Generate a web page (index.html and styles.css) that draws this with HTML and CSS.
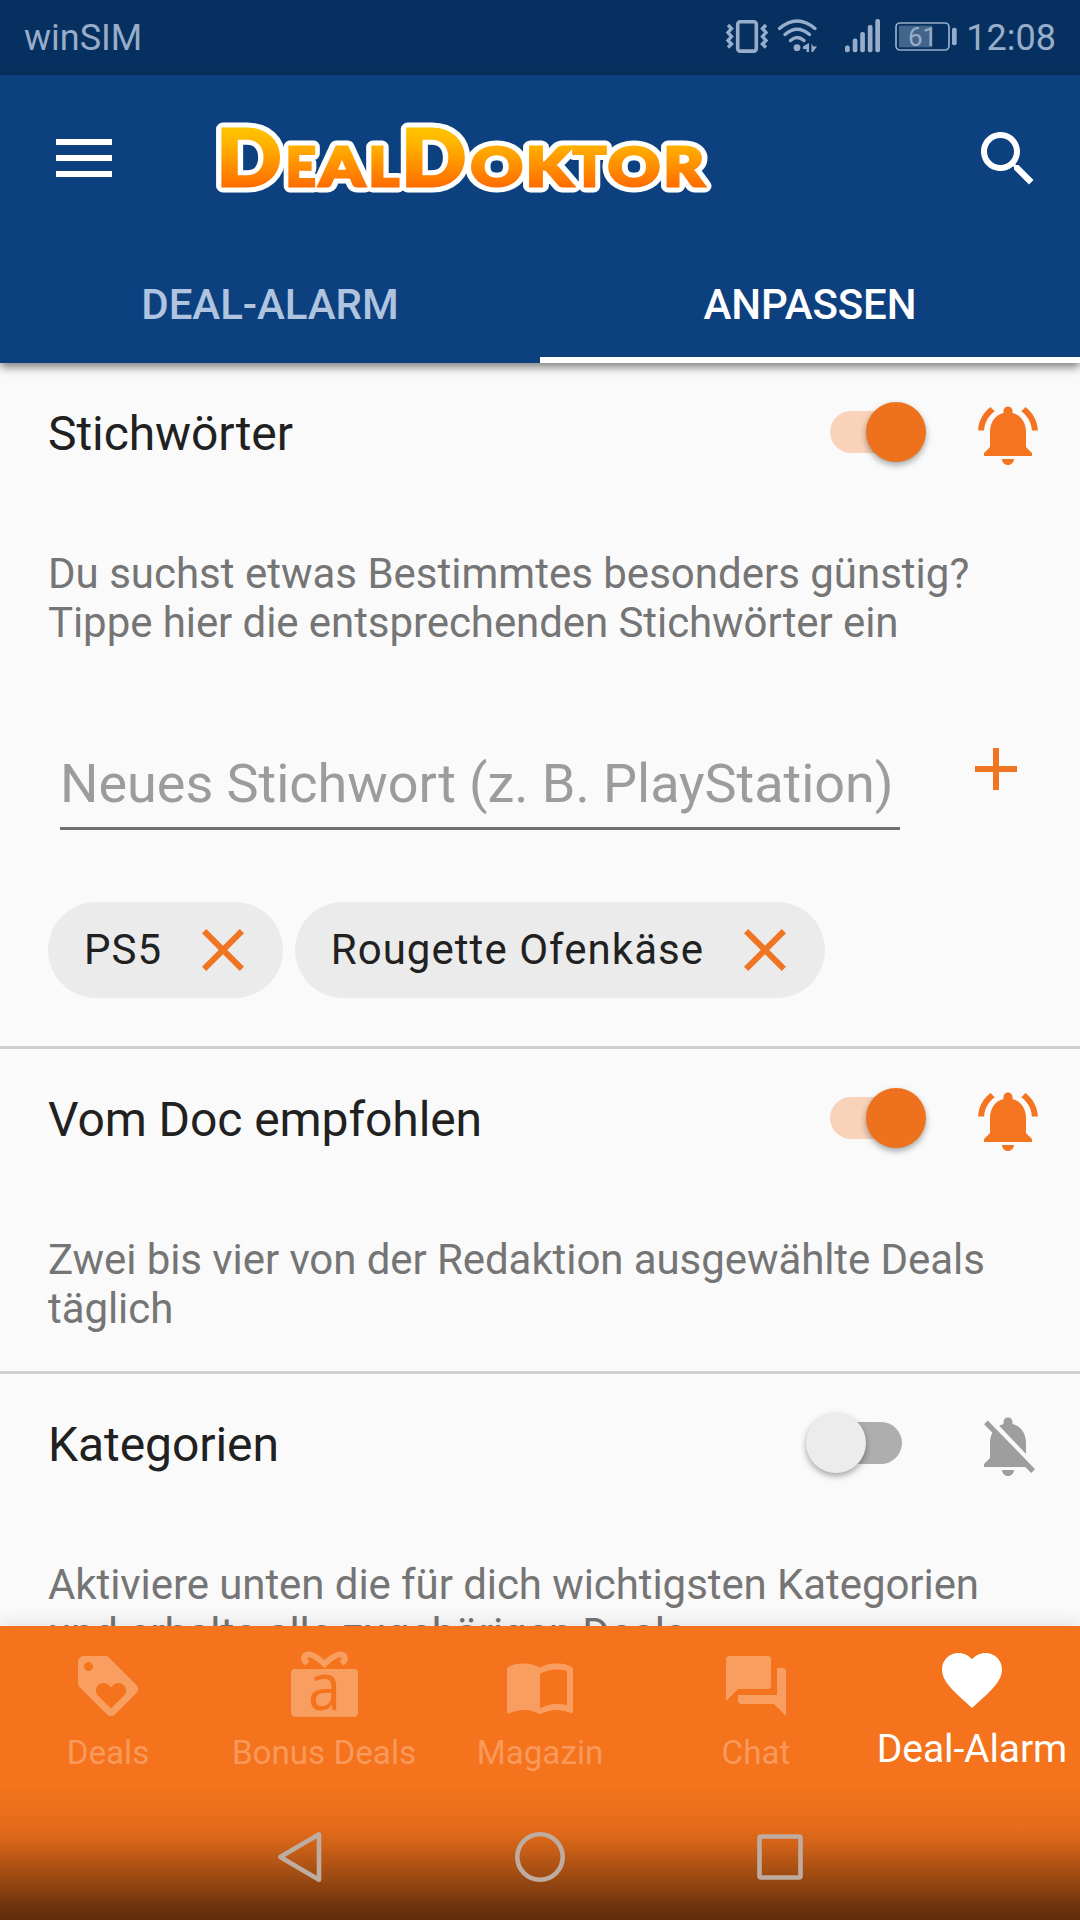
FILE: index.html
```
<!DOCTYPE html>
<html lang="de">
<head>
<meta charset="utf-8">
<title>DealDoktor – Deal-Alarm anpassen</title>
<link rel="stylesheet" href="styles.css">
</head>
<body>
<svg width="0" height="0" class="sprite" aria-hidden="true">
  <symbol id="bell-on" viewBox="0 0 24 24"><path d="M7.58 4.08L6.15 2.65C3.75 4.48 2.17 7.3 2.03 10.5h2c.15-2.65 1.51-4.97 3.55-6.42zm12.39 6.42h2c-.15-3.2-1.73-6.02-4.12-7.85l-1.42 1.43c2.02 1.45 3.39 3.77 3.54 6.42zM18 11c0-3.07-1.64-5.64-4.5-6.32V4c0-.83-.67-1.5-1.5-1.5s-1.5.67-1.5 1.5v.68C7.63 5.36 6 7.92 6 11v5l-2 2v1h16v-1l-2-2v-5zm-6 11c.14 0 .27-.01.4-.04.65-.14 1.18-.58 1.44-1.18.1-.24.15-.5.15-.78h-4c.01 1.1.9 2 2.01 2z"/></symbol>
  <symbol id="bell-off" viewBox="0 0 24 24"><path d="M20 18.69L7.84 6.14 5.27 3.49 4 4.76l2.8 2.8v.01c-.52.99-.8 2.16-.8 3.42v5l-2 2v1h13.73l2 2L21 19.72l-1-1.03zM12 22c1.11 0 2-.89 2-2h-4c0 1.11.89 2 2 2zm6-7.32V11c0-3.08-1.64-5.64-4.5-6.32V4c0-.83-.67-1.5-1.5-1.5s-1.5.67-1.5 1.5v.68c-.15.03-.29.08-.42.12-.1.03-.2.07-.3.11h-.01c-.01 0-.01 0-.02.01-.23.09-.46.2-.68.31 0 0-.01 0-.01.01L18 14.68z"/></symbol>
  <symbol id="close" viewBox="0 0 24 24"><path d="M19 6.41L17.59 5 12 10.59 6.41 5 5 6.41 10.59 12 5 17.59 6.41 19 12 13.41 17.59 19 19 17.59 13.41 12z"/></symbol>
</svg>
<div class="screen">
  <div class="statusbar">
    <span class="carrier">winSIM</span>
    <svg class="status-icons" width="240" height="75" viewBox="720 0 240 75">
      <g fill="none" stroke="currentColor">
        <rect x="737.7" y="21.7" width="18.6" height="29.4" rx="2.5" stroke-width="3.6"/>
        <path d="M728 25l3.5 3.5-3.5 4 3.5 4-3.5 4 3.5 3.5-3.5 3.5M766 25l-3.500 3.500 3.500 4-3.500 4 3.500 4-3.500 3.500 3.500 3.500" stroke-width="3.4"/>
        <path d="M779.500 28.500q17.500-15 35.500 0M785 34.500q12-10.500 24.500 0M790.500 40.500q6.500-6 13.500 0" stroke-width="3.400" stroke-linecap="round"/>
        <rect x="896" y="23" width="53" height="27" rx="4" stroke-width="1.700"/>
      </g>
      <g fill="currentColor">
        <circle cx="797" cy="47.700" r="3.400"/>
        <path d="M809 43v9h-2.500v-3h-3.500v-2.500zM811.500 43.500l2 3h3.500l-4 5.500h-1.500z"/>
        <rect x="845" y="45.500" width="4.700" height="6.700" rx="2"/>
        <rect x="852.700" y="38.500" width="4.700" height="13.700" rx="2"/>
        <rect x="860.200" y="32" width="4.700" height="20.200" rx="2"/>
        <rect x="867.800" y="25" width="4.700" height="27.200" rx="2"/>
        <rect x="875.300" y="19" width="4.700" height="33.200" rx="2"/>
        <rect x="899" y="25.700" width="33.300" height="21.600" opacity=".42"/>
        <rect x="952" y="27.700" width="4.700" height="17.600" rx="2"/>
        <text class="battery-level" x="908" y="46">61</text>
      </g>
    </svg>
    <span class="clock">12:08</span>
  </div>

  <header class="header">
    <div class="toolbar">
      <svg class="menu" width="56" height="38" viewBox="0 0 56 38"><path fill="#fff" d="M0 0h56v6H0zM0 16h56v6H0zM0 32h56v6H0z"/></svg>
      <svg class="logo" width="500" height="84" viewBox="214 117 500 84">
        <defs>
          <linearGradient id="logo-fill" gradientUnits="userSpaceOnUse" x1="0" y1="129" x2="0" y2="187">
            <stop offset="0" stop-color="#ffc200"/><stop offset=".25" stop-color="#ffb400"/><stop offset="1" stop-color="#ff6c00"/>
          </linearGradient>
          <g id="logo-word" class="logo-word">
            <text class="logo-big" x="216.700" y="185.500" textLength="64.500" lengthAdjust="spacingAndGlyphs">D</text>
            <text x="286" y="185.500" textLength="29.500" lengthAdjust="spacingAndGlyphs">E</text>
            <text x="319.800" y="185.500" textLength="44.500" lengthAdjust="spacingAndGlyphs">A</text>
            <text x="368.800" y="185.500" textLength="30" lengthAdjust="spacingAndGlyphs">L</text>
            <text class="logo-big" x="401.600" y="185.500" textLength="64.500" lengthAdjust="spacingAndGlyphs">D</text>
            <text x="470.800" y="185.500" textLength="52" lengthAdjust="spacingAndGlyphs">O</text>
            <text x="526" y="185.500" textLength="46" lengthAdjust="spacingAndGlyphs">K</text>
            <text x="573" y="185.500" textLength="33" lengthAdjust="spacingAndGlyphs">T</text>
            <text x="608" y="185.500" textLength="52" lengthAdjust="spacingAndGlyphs">O</text>
            <text x="663.800" y="185.500" textLength="40" lengthAdjust="spacingAndGlyphs">R</text>
          </g>
        </defs>
        <use href="#logo-word" fill="#fff" stroke="#fff" stroke-width="13" stroke-linejoin="round"/>
        <use href="#logo-word" fill="url(#logo-fill)" stroke="url(#logo-fill)" stroke-width="3.200"/>
      </svg>
      <svg class="search" width="72" height="72" viewBox="0 0 24 24"><path fill="#fff" d="M15.500 14h-.79l-.28-.27C15.410 12.590 16 11.110 16 9.500 16 5.910 13.090 3 9.500 3S3 5.910 3 9.500 5.910 16 9.500 16c1.610 0 3.090-.59 4.230-1.570l.27.28v.79l5 4.990L20.490 19l-4.990-5zm-6 0C7.010 14 5 11.990 5 9.500S7.010 5 9.500 5 14 7.010 14 9.500 11.990 14 9.500 14z"/></svg>
    </div>
    <nav class="tabs">
      <div class="tab">DEAL-ALARM</div>
      <div class="tab tab-active">ANPASSEN</div>
    </nav>
  </header>

  <main class="content">
    <section class="section">
      <div class="section-head">
        <h2>Stichwörter</h2>
        <div class="switch switch-on"><span class="knob"></span></div>
        <svg class="bell bell-active" width="72" height="72"><use href="#bell-on"/></svg>
      </div>
      <p>Du suchst etwas Bestimmtes besonders günstig?<br><span class="snug">Tippe hier die entsprechenden Stichwörter ein</span></p>
      <div class="keyword-row">
        <input class="keyword" type="text" placeholder="Neues Stichwort (z. B. PlayStation)">
        <svg width="72" height="72" viewBox="0 0 24 24"><path fill="#f07522" d="M19 13h-6v6h-2v-6H5v-2h6V5h2v6h6v2z"/></svg>
      </div>
      <div class="chips">
        <div class="chip"><span>PS5</span><svg width="72" height="72"><use href="#close"/></svg></div>
        <div class="chip"><span>Rougette Ofenkäse</span><svg width="72" height="72"><use href="#close"/></svg></div>
      </div>
    </section>
    <section class="section">
      <div class="section-head">
        <h2>Vom Doc empfohlen</h2>
        <div class="switch switch-on"><span class="knob"></span></div>
        <svg class="bell bell-active" width="72" height="72"><use href="#bell-on"/></svg>
      </div>
      <p class="snug">Zwei bis vier von der Redaktion ausgewählte Deals<br>täglich</p>
    </section>
    <section class="section">
      <div class="section-head">
        <h2>Kategorien</h2>
        <div class="switch"><span class="knob"></span></div>
        <svg class="bell" width="72" height="72"><use href="#bell-off"/></svg>
      </div>
      <p class="snug">Aktiviere unten die für dich wichtigsten Kategorien<br>und erhalte alle zugehörigen Deals</p>
    </section>
  </main>

  <footer class="footer">
    <nav class="bottom-nav">
      <div class="nav-item">
        <svg width="72" height="72" viewBox="0 0 24 24"><path d="M21.410 11.580l-9-9C12.050 2.220 11.550 2 11 2H4c-1.100 0-2 .9-2 2v7c0 .55.22 1.050.59 1.420l9 9c.36.36.86.58 1.410.58.55 0 1.050-.22 1.410-.59l7-7c.37-.36.59-.86.59-1.410 0-.55-.23-1.060-.59-1.420zM5.500 7C4.670 7 4 6.330 4 5.500S4.670 4 5.500 4 7 4.670 7 5.500 6.330 7 5.500 7zm11.770 8.270L13 19.540l-4.270-4.270C8.280 14.810 8 14.190 8 13.500c0-1.380 1.120-2.500 2.500-2.500.69 0 1.320.28 1.770.74l.73.72.73-.73c.45-.45 1.080-.73 1.770-.73 1.380 0 2.500 1.120 2.500 2.500 0 .69-.28 1.320-.73 1.770z"/></svg>
        <span>Deals</span>
      </div>
      <div class="nav-item">
        <svg width="72" height="72" viewBox="0 0 72 72">
          <rect x="3" y="19" width="67" height="47.700" rx="4"/>
          <path class="bow" d="M19.500 13.500C13 8 17 4 22 4.600c6 1 9.500 4.800 14.500 9.400 5-4.600 8.500-8.400 14.500-9.400 5-.6 9 3.400 2.500 8.900"/>
          <text class="gift-letter" x="20" y="59.800" textLength="33" lengthAdjust="spacingAndGlyphs">a</text>
        </svg>
        <span>Bonus Deals</span>
      </div>
      <div class="nav-item">
        <svg width="72" height="72" viewBox="0 0 24 24"><path d="M21 5c-1.110-.35-2.330-.5-3.500-.5-1.950 0-4.050.4-5.500 1.500-1.450-1.100-3.550-1.500-5.500-1.500S2.450 4.900 1 6v14.650c0 .25.25.5.5.5.1 0 .15-.05.25-.05C3.100 20.450 5.050 20 6.500 20c1.950 0 4.050.4 5.500 1.500 1.350-.85 3.800-1.500 5.500-1.500 1.650 0 3.350.3 4.750 1.050.1.05.15.05.25.05.25 0 .5-.25.5-.5V6c-.6-.45-1.250-.75-2-1zm0 13.500c-1.100-.35-2.300-.5-3.500-.5-1.700 0-4.150.65-5.500 1.500V8c1.350-.85 3.800-1.500 5.500-1.500 1.200 0 2.400.15 3.500.5v11.500z"/></svg>
        <span>Magazin</span>
      </div>
      <div class="nav-item">
        <svg width="72" height="72" viewBox="0 0 24 24"><path d="M21 6h-2v9H6v2c0 .55.45 1 1 1h11l4 4V7c0-.55-.45-1-1-1zm-4 6V3c0-.55-.45-1-1-1H3c-.55 0-1 .45-1 1v14l4-4h10c.55 0 1-.45 1-1z"/></svg>
        <span>Chat</span>
      </div>
      <div class="nav-item nav-active">
        <svg width="72" height="72" viewBox="0 0 24 24"><path d="M12 21.350l-1.450-1.320C5.400 15.360 2 12.280 2 8.500 2 5.420 4.420 3 7.500 3c1.740 0 3.410.81 4.500 2.090C13.090 3.810 14.760 3 16.500 3 19.580 3 22 5.420 22 8.500c0 3.780-3.400 6.860-8.550 11.540L12 21.350z"/></svg>
        <span>Deal-Alarm</span>
      </div>
    </nav>
    <div class="system-nav">
      <svg width="60" height="60"><path d="M10.300 30L49 7.300v45.400z"/></svg>
      <svg width="60" height="60"><circle cx="30" cy="30" r="22.700"/></svg>
      <svg width="60" height="60"><rect x="9.500" y="9.500" width="41" height="41" rx="1.500"/></svg>
    </div>
  </footer>
</div>
</body>
</html>
```
FILE: styles.css
```
* { box-sizing: border-box; }

body {
  margin: 0;
  font-family: Roboto, "Liberation Sans", sans-serif;
  background: #fafafa;
}

svg { display: block; flex: none; }
.sprite { position: absolute; }

.screen {
  width: 1080px;
  height: 1920px;
  display: flex;
  flex-direction: column;
  overflow: hidden;
}

.statusbar {
  flex: none;
  height: 75px;
  padding: 0 24px;
  display: flex;
  align-items: center;
  background: #06305f;
  color: #98adc9;
  font-size: 36px;
}
.carrier { margin-right: auto; }
.status-icons { margin-right: 6px; }
.battery-level { font-size: 26px; }

.header {
  flex: none;
  position: relative;
  z-index: 1;
  background: #0d407f;
  color: #fff;
  box-shadow: 0 4px 9px rgba(0, 0, 0, .5);
}
.toolbar {
  height: 168px;
  padding: 0 36px 0 56px;
  display: flex;
  align-items: center;
}
.menu { margin-right: 102px; margin-top: -2px; }
.search { margin-left: auto; }
.logo-word { font: 900 54px Lato, sans-serif; }
.logo-big { font-size: 77.5px; }

.tabs {
  height: 120px;
  display: flex;
}
.tab {
  flex: 1;
  display: flex;
  align-items: center;
  justify-content: center;
  padding-top: 2px;
  font-size: 42px;
  font-weight: 500;
  letter-spacing: -.05px;
  color: #b0c4df;
}
.tab-active {
  padding-top: 8px;
  letter-spacing: -.1px;
  color: #fff;
  border-bottom: 6px solid #fff;
}

.content {
  flex: 1;
  min-height: 0;
  overflow: hidden;
}
.section {
  padding: 0 36px 38px 48px;
  border-bottom: 3px solid #cfcfcf;
}
.section-head {
  height: 140px;
  display: flex;
  align-items: center;
}
.section-head h2 {
  margin: 0 auto 0 0;
  font-size: 48px;
  font-weight: 400;
  letter-spacing: -.08px;
  color: #212121;
}
.section p {
  margin: 46px 0 0;
  font-size: 42px;
  line-height: 49px;
  color: #757575;
}
.snug { letter-spacing: -.075px; }

.switch {
  width: 90px;
  height: 42px;
  margin-right: 70px;
  margin-top: -3px;
  display: flex;
  align-items: center;
  border-radius: 21px;
  background: #aeaeae;
}
.switch-on {
  margin-right: 52px;
  justify-content: flex-end;
  background: #f8d2b9;
}
.knob {
  flex: none;
  width: 60px;
  height: 60px;
  margin: 0 -6px;
  border-radius: 50%;
  background: #ececec;
  box-shadow: 0 3px 6px rgba(0, 0, 0, .35);
}
.switch-on .knob { background: #ee721d; }

.bell { margin-top: 4px; fill: #9e9e9e; }
.bell-active { fill: #f4741f; }

.keyword-row {
  margin: 86px 12px 0;
  display: flex;
  align-items: flex-start;
  gap: 60px;
}
.keyword {
  width: 840px;
  height: 78px;
  margin-top: 19px;
  padding: 0 0 12px;
  border: 0;
  border-bottom: 3px solid #707272;
  background: none;
  font: 54px Roboto, "Liberation Sans", sans-serif;
  letter-spacing: -.04px;
}
.keyword::placeholder { color: #9c9c9c; opacity: 1; }

.chips {
  margin: 72px 0 10px;
  display: flex;
  gap: 12px;
}
.chip {
  height: 96px;
  padding: 0 24px 0 36px;
  display: flex;
  align-items: center;
  gap: 24.5px;
  border-radius: 48px;
  background: #ebebeb;
  color: #212121;
  font-size: 42px;
  letter-spacing: .025em;
}
.chip span { margin-top: -2px; }
.chip svg { fill: #f07522; }

.footer {
  flex: none;
  height: 294px;
  position: relative;
  z-index: 1;
  background: linear-gradient(transparent 160px, rgba(0, 0, 0, .07) 204px, rgba(0, 0, 0, .17) 222px, rgba(0, 0, 0, .31) 243px, rgba(0, 0, 0, .42) 261px, rgba(0, 0, 0, .54) 279px, rgba(0, 0, 0, .61)) #f4731c;
  box-shadow: 0 0 20px rgba(0, 0, 0, .13);
}
.bottom-nav {
  height: 164px;
  display: flex;
}
.nav-item {
  flex: 1 0 0;
  padding-top: 24px;
  display: flex;
  flex-direction: column;
  align-items: center;
  gap: 11px;
  font-size: 33.2px;
  line-height: 40px;
  color: #f9995b;
  fill: #f99e61;
}
.nav-active {
  padding-top: 18px;
  gap: 13px;
  font-size: 39px;
  letter-spacing: -.1px;
  color: #fff;
  fill: #fff;
}
.bow {
  fill: none;
  stroke: #f99e61;
  stroke-width: 6;
}
.gift-letter {
  font: 500 66px "Open Sans", sans-serif;
  fill: #f4731c;
}

.system-nav {
  height: 130px;
  padding-top: 4px;
  display: flex;
  align-items: center;
  justify-content: center;
  gap: 180px;
}
.system-nav svg {
  fill: none;
  stroke: #bfaca0;
  stroke-width: 4.6;
  stroke-linejoin: round;
}
```
